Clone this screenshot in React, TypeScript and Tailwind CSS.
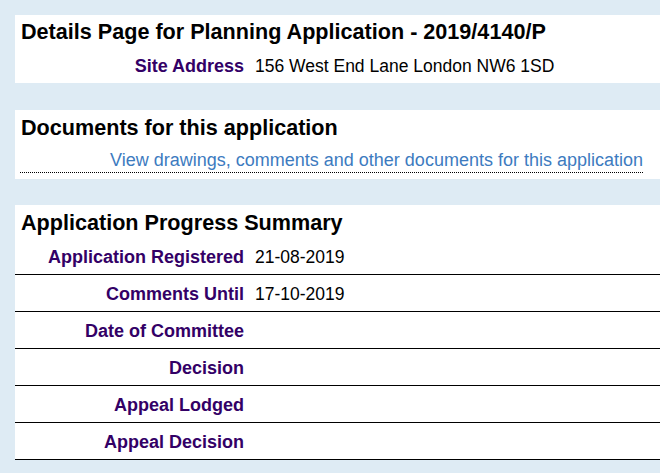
const progress = [
  { label: "Application Registered", value: "21-08-2019" },
  { label: "Comments Until", value: "17-10-2019" },
  { label: "Date of Committee", value: "" },
  { label: "Decision", value: "" },
  { label: "Appeal Lodged", value: "" },
  { label: "Appeal Decision", value: "" },
];

const Row: React.FC<{ label: string; value: string; className?: string }> = ({
  label,
  value,
  className,
}) => {
  return (
    <div className={`flex leading-[21px] ${className ?? ""}`}>
      <div className="w-[234px] shrink-0 pr-[5px] text-right text-[18px] font-bold text-[#330066]">{label}</div>
      <div className="pl-[6px] text-[17.5px] text-black">{value}</div>
    </div>
  );
};

export default function App() {
  return (
    <div
      className="min-h-[473px] bg-[#deebf4] pl-[15px] pt-[15px] pb-[14px]"
      style={{ fontFamily: '"Liberation Sans", Arial, sans-serif' }}
    >
      {/* application header */}
      <section className="bg-white pt-[4px] pb-[6px]">
        <h1 className="pl-[6px] text-[21.6px] leading-[25px] font-bold text-black">
          Details Page for Planning Application - 2019/4140/P
        </h1>
        <Row label="Site Address" value="156 West End Lane London NW6 1SD" className="pt-[12px]" />
      </section>

      {/* documents */}
      <section className="mt-[27px] bg-white pt-[5px] pb-[6px]">
        <h2 className="pl-[6px] text-[21.6px] leading-[25px] font-bold text-black">
          Documents for this application
        </h2>
        <div className="mr-[17px] ml-[5px] mt-[10px] border-b border-dotted border-black pb-[1px] text-right text-[18px] leading-[21px]">
          <a href="#" className="text-[#3d7bbf]">
            View drawings, comments and other documents for this application
          </a>
        </div>
      </section>

      {/* progress summary */}
      <section className="mt-[26px] bg-white pt-[5px]">
        <h2 className="pl-[6px] pb-[3px] text-[21.6px] leading-[25px] font-bold text-black">
          Application Progress Summary
        </h2>
        {progress.map((p) => (
          <Row
            key={p.label}
            label={p.label}
            value={p.value}
            className="h-[37px] items-center border-b border-black pt-[2px]"
          />
        ))}
      </section>
    </div>
  );
}
